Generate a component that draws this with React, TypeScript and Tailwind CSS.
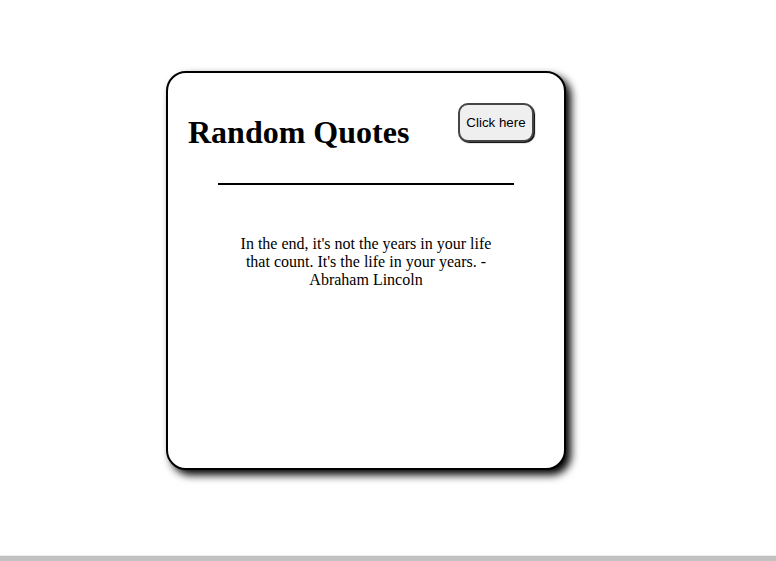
import { useState } from "react";

// A few quotes to cycle through when the button is pressed
const QUOTES = [
  "In the end, it's not the years in your life that count. It's the life in your years. - Abraham Lincoln",
  "The purpose of our lives is to be happy. - Dalai Lama",
  "Life is what happens when you're busy making other plans. - John Lennon",
];

function App() {
  const [index, setIndex] = useState(0); // Which quote is shown

  const nextQuote = () => {
    setIndex((i) => (i + 1) % QUOTES.length);
  };

  return (
    <div className="h-screen flex flex-col bg-white font-['Liberation_Serif',serif] text-black">
      <div className="flex-1 pl-[166px] pt-[71px]">
        {/* Quote card */}
        <div className="w-[400px] h-[399px] border-2 border-black rounded-[20px] bg-white shadow-[5px_5px_9px_black] flex flex-col">
          <div className="flex justify-between items-start">
            <h1 className="mt-[41px] ml-[20px] text-[32px] font-bold leading-[37px]">
              Random Quotes
            </h1>
            <button
              onClick={nextQuote}
              className="mt-[30px] mr-[30px] w-[76px] h-[39px] border-2 border-[#454545] rounded-[10px] bg-[#efefef] font-['Liberation_Sans',Arial,sans-serif] text-[13.33px] text-black shadow-[1px_1px_1px_black]"
            >
              Click here
            </button>
          </div>

          {/* Divider */}
          <div className="mt-[32px] mx-auto w-[296px] h-[2px] bg-black" />

          {/* Quote text */}
          <p className="mt-[50px] mx-auto w-[262px] text-center text-[16px] leading-[18px]">
            {QUOTES[index]}
          </p>
        </div>
      </div>

      {/* Bottom bar */}
      <div className="h-[6px] border-t border-[#ebebeb] bg-[#c1c1c1]" />
    </div>
  );
}

export default App;
